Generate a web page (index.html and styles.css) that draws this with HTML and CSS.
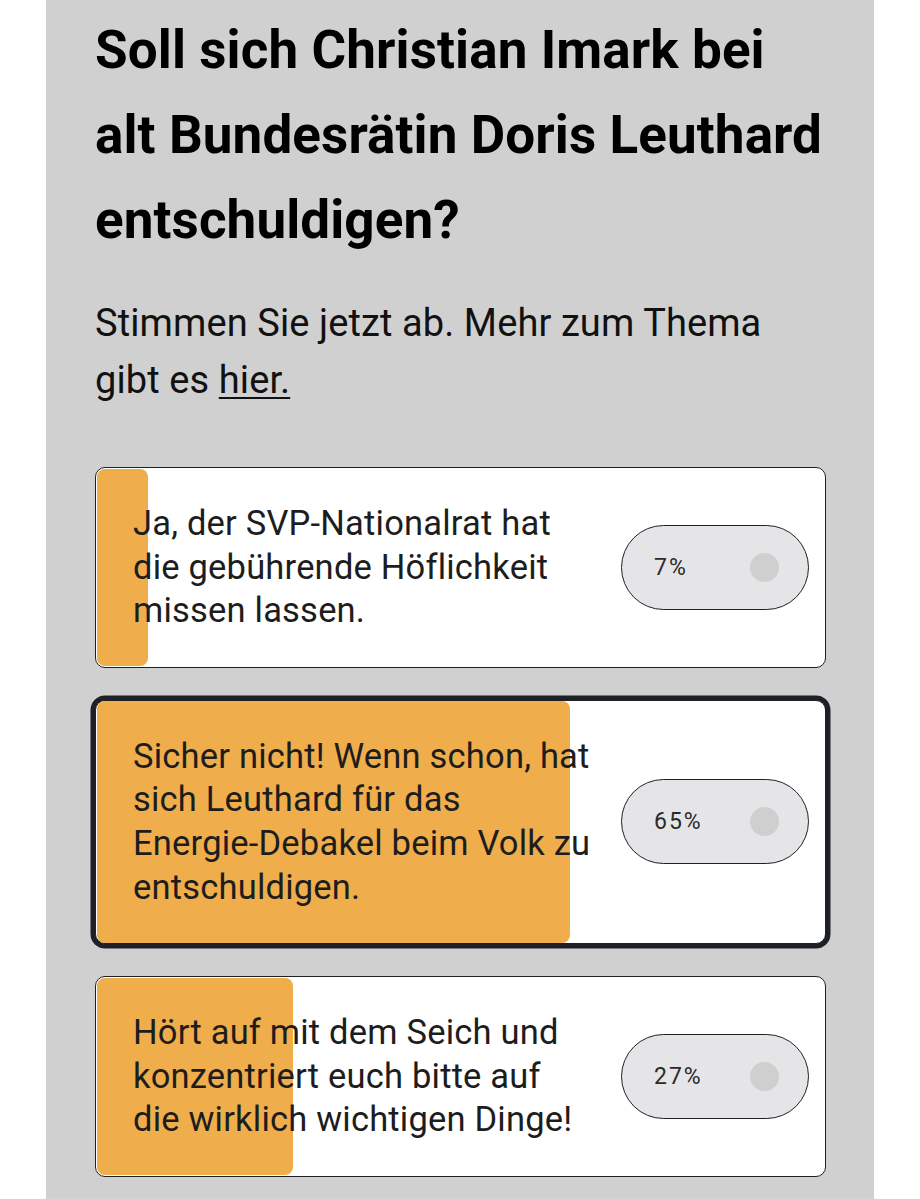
FILE: index.html
```html
<!DOCTYPE html>
<html lang="de">
<head>
<meta charset="utf-8">
<title>Umfrage</title>
<link rel="stylesheet" href="styles.css">
</head>
<body>
<main class="panel">
  <h1 class="title">Soll sich Christian Imark bei alt Bundesrätin Doris Leuthard entschuldigen?</h1>
  <p class="lead">Stimmen Sie jetzt ab. Mehr zum Thema gibt es <a href="#" class="link">hier.</a></p>
  <div class="options">
    <div class="option">
      <div class="bar" style="width: 7%"></div>
      <div class="label">Ja, der SVP-Nationalrat hat die gebührende Höflichkeit missen lassen.</div>
      <div class="pill"><span class="pct">7%</span><span class="dot"></span></div>
    </div>
    <div class="option selected">
      <div class="bar" style="width: 65%"></div>
      <div class="label">Sicher nicht! Wenn schon, hat sich Leuthard für das <span class="nowrap">Energie-Debakel</span> beim Volk zu entschuldigen.</div>
      <div class="pill"><span class="pct">65%</span><span class="dot"></span></div>
    </div>
    <div class="option">
      <div class="bar" style="width: 27%"></div>
      <div class="label">Hört auf mit dem Seich und konzentriert euch bitte auf die wirklich wichtigen Dinge!</div>
      <div class="pill"><span class="pct">27%</span><span class="dot"></span></div>
    </div>
  </div>
</main>
</body>
</html>
```

FILE: styles.css
```css
html, body {
  margin: 0;
  padding: 0;
  background: #ffffff;
}

body {
  font-family: Roboto, "Liberation Sans", sans-serif;
  color: #000;
}

.panel {
  width: 828px;
  margin-left: 46px;
  box-sizing: border-box;
  background: #d0d0d0;
  padding: 8px 48px 20px 49px;
  min-height: 1199px;
}

.title {
  margin: 0;
  font-size: 53px;
  font-weight: 700;
  line-height: 85px;
  letter-spacing: 0.1px;
  color: #000;
}

.lead {
  margin: 32px 0 0 0;
  font-size: 38px;
  line-height: 57px;
  font-weight: 400;
  color: #111;
  letter-spacing: 0.1px;
}

.link {
  color: #111;
  text-decoration: underline;
  text-decoration-thickness: 2px;
  text-underline-offset: 4px;
}

.options {
  margin-top: 58px;
  display: flex;
  flex-direction: column;
  gap: 32px;
}

.option {
  position: relative;
  background: #fff;
  border: 1.5px solid #1d2125;
  border-radius: 10px;
  display: grid;
  grid-template-columns: 1fr 188px;
  column-gap: 27px;
  align-items: center;
  padding: 34px 16px 34px 37px;
}

.option.selected {
  box-shadow: 0 0 0 4.5px #1d2125;
}

.bar {
  position: absolute;
  left: 0.5px;
  top: 0.5px;
  bottom: 0.5px;
  background: #efad4c;
  border-radius: 8px;
}

.label {
  position: relative;
  font-size: 34.5px;
  line-height: 43.6px;
  color: #1d1d1d;
  letter-spacing: 0.2px;
}

.nowrap {
  white-space: nowrap;
}

.pill {
  position: relative;
  height: 83px;
  border: 1.5px solid #1d2125;
  border-radius: 44px;
  background: #e5e5e7;
  display: flex;
  align-items: center;
  justify-content: space-between;
  padding: 0 29px 0 32px;
}

.pct {
  font-size: 23px;
  letter-spacing: 2px;
  color: #2a2a2a;
}

.dot {
  width: 29px;
  height: 29px;
  border-radius: 50%;
  background: #cfcfcf;
}
```
